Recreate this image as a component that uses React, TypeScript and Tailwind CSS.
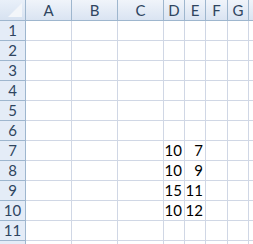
import React from "react";

const cols = ["A", "B", "C", "D", "E", "F", "G", ""];
const rows = [1, 2, 3, 4, 5, 6, 7, 8, 9, 10, 11, 12];

const data: Record<string, string> = {
  "D7": "10", "E7": "7",
  "D8": "10", "E8": "9",
  "D9": "15", "E9": "11",
  "D10": "10", "E10": "12",
};

export default function App() {
  return (
    <div
      className="w-[253px] h-[244px] overflow-hidden bg-white text-[15px] text-black"
      style={{ fontFamily: "Lato, 'Open Sans', sans-serif" }}
    >
      <div className="grid grid-cols-[26px_46px_46px_46px_21px_21px_22px_21px_30px] grid-rows-[21px_repeat(12,20px)]">
        {/* corner */}
        <div className="relative border-r border-b border-[#9eb6ce] bg-gradient-to-b from-[#e9f0f9] to-[#d7e2f1]">
          <div className="absolute right-[3px] bottom-[3px] w-0 h-0 border-l-[14px] border-l-transparent border-b-[14px] border-b-[#f3f6fa]" />
        </div>
        {cols.map((c, i) => (
          <div
            key={"h" + i}
            className="flex items-center justify-center border-r border-b border-[#9eb6ce] bg-gradient-to-b from-[#f0f4fa] to-[#dae4f2] text-[#2f4560] leading-none"
          >
            {c}
          </div>
        ))}
        {rows.map((r) => (
          <React.Fragment key={r}>
            <div className="flex items-center justify-center border-r border-b border-[#9eb6ce] bg-[#e4ecf7] text-[#2f4560] leading-none">
              {r < 12 ? r : ""}
            </div>
            {cols.map((c, i) => (
              <div
                key={c + i}
                className="flex items-center justify-end pr-[2px] border-r border-b border-[#d0d7e5] leading-none"
              >
                {data[c + r] ?? ""}
              </div>
            ))}
          </React.Fragment>
        ))}
      </div>
    </div>
  );
}
